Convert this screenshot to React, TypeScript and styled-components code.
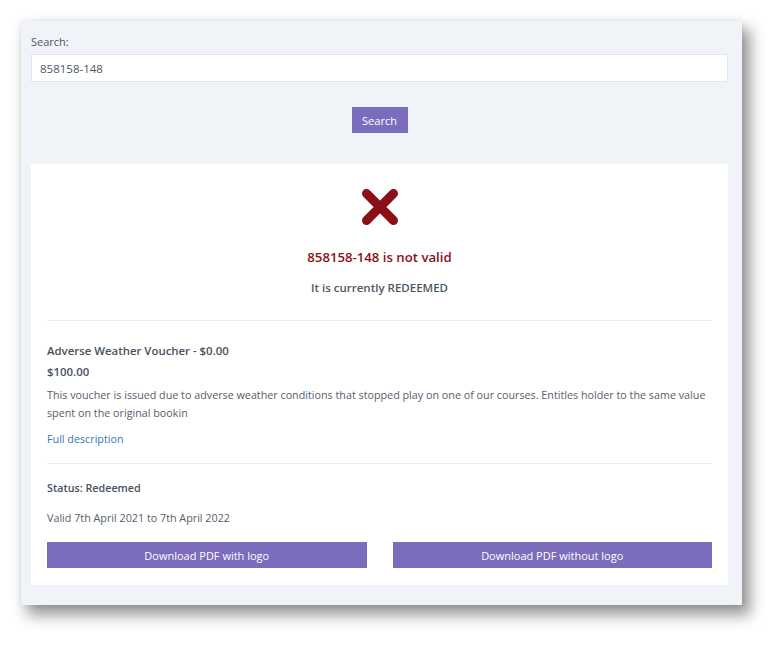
import React from "react";
import styled, { createGlobalStyle } from "styled-components";

const Global = createGlobalStyle`
  html, body { margin: 0; padding: 0; background: #ffffff; }
  body { font-family: "Open Sans", "Noto Sans", sans-serif; color: #525b66; }
  * { box-sizing: border-box; }
`;

const Page = styled.div`
  padding: 21px 0 0 21px;
  width: 784px;
  height: 647px;
`;

const Panel = styled.div`
  width: 721px;
  height: 584px;
  background: #f0f3f8;
  padding: 14px 14px 20px 10px;
  display: flex;
  flex-direction: column;
  box-shadow: 7px 9px 14px 1px rgba(0, 0, 0, 0.42), 0 0 6px rgba(0, 0, 0, 0.08);
`;

const Label = styled.label`
  display: block;
  font-size: 11px;
  line-height: 14px;
  color: #4e5764;
`;

const Input = styled.input`
  display: block;
  margin-top: 5px;
  height: 28px;
  min-height: 28px;
  width: 697px;
  border: 1px solid #e2e5ea;
  background: #ffffff;
  padding: 0 8px;
  font-family: inherit;
  font-size: 11.5px;
  color: #4e5764;
  outline: none;
`;

const ButtonRow = styled.div`
  display: flex;
  justify-content: center;
  width: 697px;
  margin-top: 25px;
`;

const SearchButton = styled.button`
  height: 26px;
  width: 56px;
  border: none;
  background: #7b6cbd;
  color: #ffffff;
  font-family: inherit;
  font-size: 11px;
  padding: 0;
`;

const Card = styled.div`
  margin-top: 31px;
  width: 697px;
  flex: 1;
  background: #ffffff;
  padding: 24px 16px 17px 16px;
  display: flex;
  flex-direction: column;
`;

const Result = styled.div`
  display: flex;
  flex-direction: column;
  align-items: center;
`;

const Title = styled.div`
  margin-top: 21px;
  font-size: 13.2px;
  line-height: 20px;
  font-weight: 600;
  color: #8b1218;
`;

const Subtitle = styled.div`
  margin-top: 12px;
  font-size: 11.5px;
  line-height: 18px;
  font-weight: 600;
  color: #4e5764;
`;

const Divider = styled.hr<{ $gap: number }>`
  margin: ${(p) => p.$gap}px 0 0 0;
  border: none;
  border-top: 1px solid #e8ebef;
  height: 0;
`;

const Text = styled.div<{ $gap: number; $weight?: number; $size?: number }>`
  margin-top: ${(p) => p.$gap}px;
  font-size: ${(p) => p.$size ?? 10.75}px;
  line-height: 18px;
  font-weight: ${(p) => p.$weight ?? 400};
  color: ${(p) => ((p.$weight ?? 400) > 400 ? "#48515c" : "#555e6a")};
`;

const Link = styled.a`
  margin-top: 8px;
  font-size: 10.75px;
  line-height: 18px;
  color: #3a78b5;
  text-decoration: none;
`;

const Downloads = styled.div`
  margin-top: 15px;
  display: grid;
  grid-template-columns: 1fr 1fr;
  gap: 26px;
`;

const DownloadButton = styled.button`
  height: 26px;
  border: none;
  background: #7b6cbd;
  color: #ffffff;
  font-family: inherit;
  font-size: 11px;
  padding: 0;
`;

const XIcon = () => (
  <svg width="38" height="38" viewBox="0 0 38 38">
    <path
      d="M5.5 5.5 L32.5 32.5 M32.5 5.5 L5.5 32.5"
      stroke="#8b0f16"
      strokeWidth="9"
      strokeLinecap="round"
      fill="none"
    />
  </svg>
);

export default function App() {
  return (
    <>
      <Global />
      <Page>
        <Panel>
          <Label>Search:</Label>
          <Input defaultValue="858158-148" />
          <ButtonRow>
            <SearchButton>Search</SearchButton>
          </ButtonRow>
          <Card>
            <Result>
              <XIcon />
              <Title>858158-148 is not valid</Title>
              <Subtitle>It is currently REDEEMED</Subtitle>
            </Result>
            <Divider $gap={23} />
            <Text $gap={21} $weight={600} $size={11.4}>
              Adverse Weather Voucher - $0.00
            </Text>
            <Text $gap={3} $weight={600} $size={11.4}>
              $100.00
            </Text>
            <Text $gap={5}>
              This voucher is issued due to adverse weather conditions that stopped play on one of our courses.
              Entitles holder to the same value spent on the original bookin
            </Text>
            <Link href="#">Full description</Link>
            <Divider $gap={15} />
            <Text $gap={15} $weight={600}>
              Status: Redeemed
            </Text>
            <Text $gap={12}>Valid 7th April 2021 to 7th April 2022</Text>
            <Downloads>
              <DownloadButton>Download PDF with logo</DownloadButton>
              <DownloadButton>Download PDF without logo</DownloadButton>
            </Downloads>
          </Card>
        </Panel>
      </Page>
    </>
  );
}
